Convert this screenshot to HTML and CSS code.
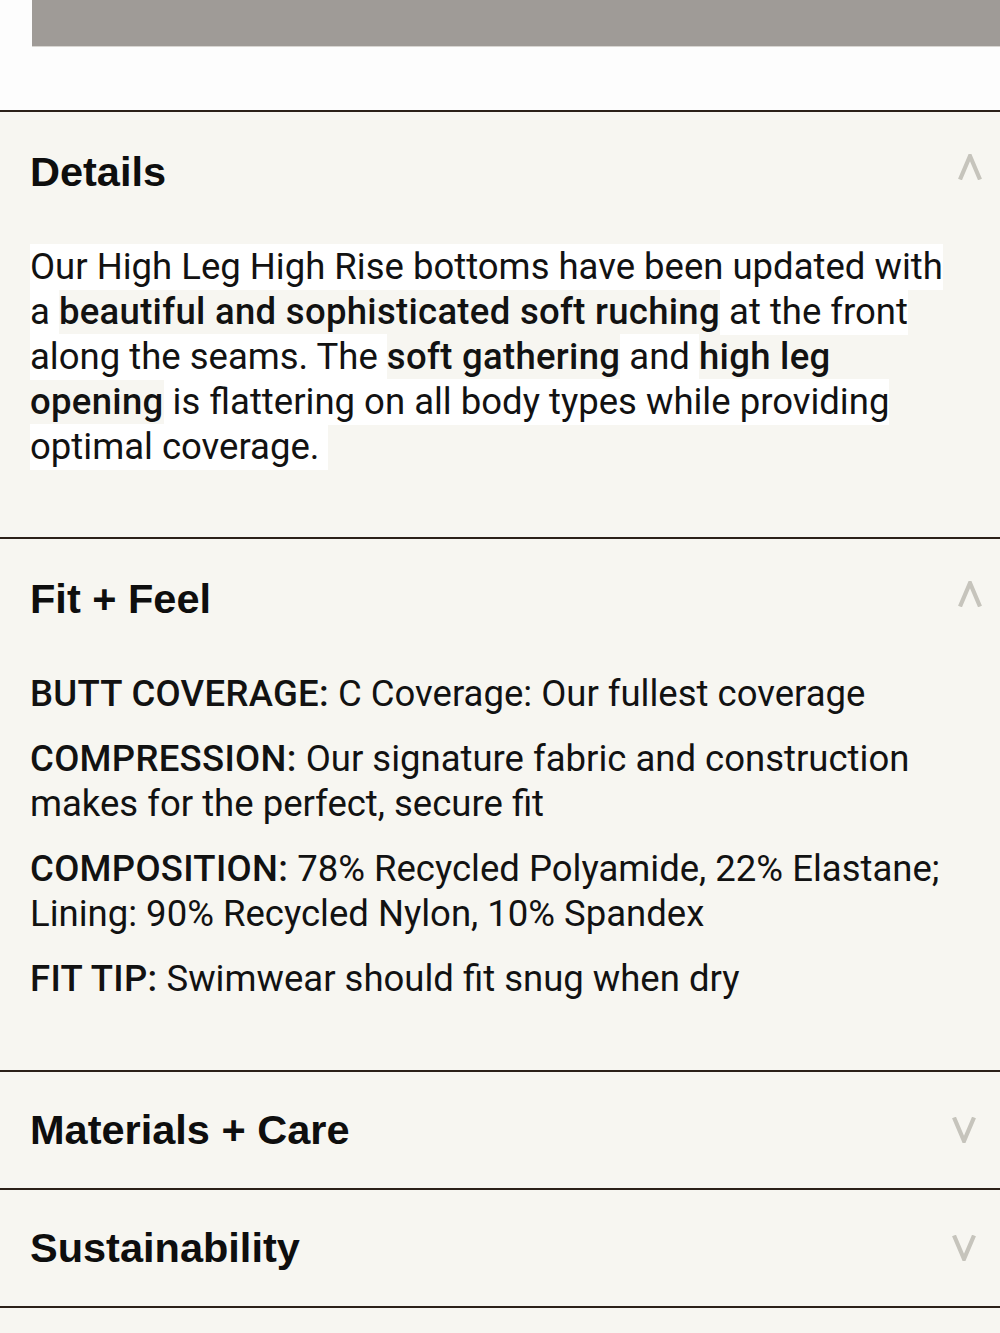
FILE: index.html
```html
<!DOCTYPE html>
<html lang="en">
<head>
<meta charset="utf-8">
<title>Product details</title>
<link rel="stylesheet" href="styles.css">
</head>
<body>
  <div class="top">
    <div class="banner"></div>
  </div>

  <section class="panel">
    <div class="panel-head">
      <h2>Details</h2>
      <svg class="chev" viewBox="0 0 24 26" width="24" height="26"><polyline points="2,25.5 12,2 22,25.5" fill="none" stroke="currentColor" stroke-width="4.2"/></svg>
    </div>
    <p class="desc"><span class="hl">Our High Leg High Rise bottoms have been updated with a </span><b>beautiful and sophisticated soft ruching</b><span class="hl"> at the front along the seams. The </span><b>soft gathering</b><span class="hl"> and </span><b>high leg opening</b><span class="hl"> is flattering on all body types while providing optimal coverage.&nbsp;</span></p>
  </section>

  <section class="panel">
    <div class="panel-head">
      <h2>Fit + Feel</h2>
      <svg class="chev" viewBox="0 0 24 26" width="24" height="26"><polyline points="2,25.5 12,2 22,25.5" fill="none" stroke="currentColor" stroke-width="4.2"/></svg>
    </div>
    <ul class="specs">
      <li><b>BUTT COVERAGE:</b> C Coverage: Our fullest coverage</li>
      <li><b>COMPRESSION:</b> Our signature fabric and construction makes for the perfect, secure fit</li>
      <li><b>COMPOSITION:</b> 78% Recycled Polyamide, 22% Elastane; Lining: 90% Recycled Nylon, 10% Spandex</li>
      <li><b>FIT TIP:</b> Swimwear should fit snug when dry</li>
    </ul>
  </section>

  <section class="panel closed">
    <div class="panel-head">
      <h2>Materials + Care</h2>
      <svg class="chev down" viewBox="0 0 24 26" width="24" height="26"><polyline points="2,0.5 12,24 22,0.5" fill="none" stroke="currentColor" stroke-width="4.2"/></svg>
    </div>
  </section>

  <section class="panel closed">
    <div class="panel-head">
      <h2>Sustainability</h2>
      <svg class="chev down" viewBox="0 0 24 26" width="24" height="26"><polyline points="2,0.5 12,24 22,0.5" fill="none" stroke="currentColor" stroke-width="4.2"/></svg>
    </div>
  </section>

  <div class="tail"></div>
</body>
</html>
```

FILE: styles.css
```css
html, body {
  margin: 0;
  padding: 0;
}

body {
  width: 1000px;
  height: 1333px;
  overflow: hidden;
  background: #f7f6f1;
  color: #121212;
  font-family: Roboto, "Noto Sans", sans-serif;
}

.top {
  background: #fdfdfd;
  height: 110px;
  padding-left: 32px;
}

.banner {
  height: 46px;
  background: #9f9b97;
  border-bottom: 1px solid #d8d6d2;
}

.panel {
  border-top: 2px solid #2b2119;
  background: #f7f6f1;
  padding: 0 30px;
}

.panel-head {
  display: flex;
  align-items: center;
  justify-content: space-between;
  height: 120px;
}

.panel.closed .panel-head {
  height: 116px;
}

.panel-head h2 {
  margin: 0;
  font-family: "Liberation Sans", Arial, sans-serif;
  font-weight: 700;
  font-size: 41.5px;
  color: #0e0e0e;
}

.chev {
  color: #c6c4bc;
  margin-right: -12px;
  margin-top: -10px;
}

.chev.down {
  margin-right: -6px;
  margin-top: 0;
}

.desc,
.specs {
  margin: 0;
  margin-right: 10px;
  font-size: 36.5px;
  line-height: 45px;
  font-weight: 400;
}

.desc {
  padding: 12px 0 68px;
}

.desc .hl {
  background: #ffffff;
  padding: 1px 0 2px;
  -webkit-box-decoration-break: clone;
  box-decoration-break: clone;
}

.desc b,
.specs b {
  font-weight: 500;
  letter-spacing: 0.3px;
}

.specs {
  list-style: none;
  padding: 12px 0 69px;
}

.specs li {
  margin-bottom: 20px;
}

.specs li:last-child {
  margin-bottom: 0;
}

.tail {
  border-top: 2px solid #2b2119;
  height: 40px;
}
```
